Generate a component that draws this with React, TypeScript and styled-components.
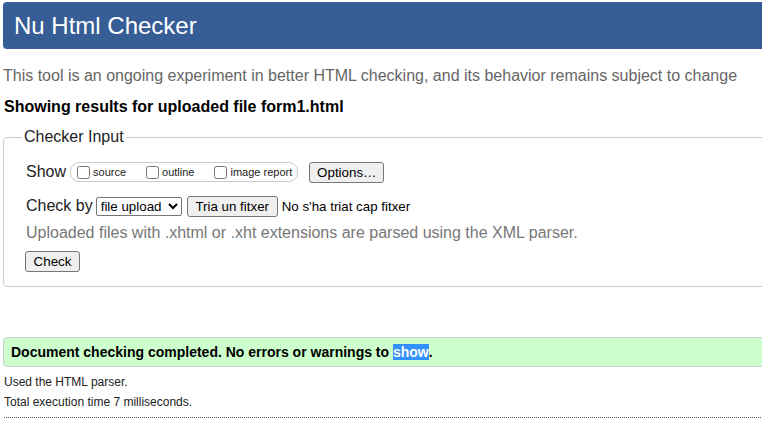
import styled, { createGlobalStyle } from "styled-components";

const GlobalStyle = createGlobalStyle`
    html, body {
        margin: 0;
        padding: 0;
        background: #fff;
        overflow: hidden;
    }
    body {
        font-family: "Liberation Sans", Arial, sans-serif;
        color: #000;
    }
`

const Page = styled.div`
    width: 800px;
    padding: 2px 0 0 3px;
`

const Header = styled.h1`
    margin: 0;
    height: 47px;
    display: flex;
    align-items: center;
    padding-left: 11px;
    background: #365d95;
    color: #fff;
    font-size: 24px;
    font-weight: 400;
    border-radius: 4px 0 0 4px;
`

const Intro = styled.p`
    margin: 18px 0 0 0;
    font-size: 16px;
    line-height: 18px;
    color: #666;
`

const Results = styled.p`
    margin: 13px 0 0 1px;
    font-size: 16px;
    line-height: 18px;
    font-weight: 700;
`

const Fieldset = styled.fieldset`
    margin: 12px 0 0 0;
    padding: 10px 0 6px 22px;
    border: 1px solid #ccc;
    border-radius: 4px 0 0 4px;
    min-width: 0;
`

const Legend = styled.legend`
    margin-left: -4px;
    padding: 0 2px;
    font-size: 16px;
    line-height: 18px;
    color: #222;
`

const Row = styled.div<{ $h: number }>`
    display: flex;
    align-items: center;
    height: ${p => p.$h}px;
`

const Label = styled.span`
    font-size: 16px;
    color: #222;
`

const Pill = styled.div`
    display: flex;
    align-items: center;
    height: 18px;
    margin-left: 4px;
    padding: 0 5px 0 6px;
    border: 1px solid #ccc;
    border-radius: 9px;
`

const Option = styled.label`
    display: flex;
    align-items: center;
    font-size: 11px;
    color: #222;
    margin-right: 20px;
    &:last-child { margin-right: 0; }

    input {
        width: 13px;
        height: 13px;
        margin: 0 3px 0 0;
    }
`

const Button = styled.button<{ $w: number; $ml?: number }>`
    width: ${p => p.$w}px;
    height: 21px;
    margin-left: ${p => p.$ml ?? 0}px;
    padding: 0;
    font-family: "Liberation Sans", Arial, sans-serif;
    font-size: 13.33px;
    color: #000;
    background: #efefef;
    border: 1px solid #767676;
    border-radius: 3px;
`

const Select = styled.select`
    width: 86px;
    height: 19px;
    margin-left: 3px;
    padding: 0;
    font-family: "Liberation Sans", Arial, sans-serif;
    font-size: 13.33px;
    color: #000;
    background: #fff;
    border: 1px solid #767676;
    border-radius: 2px;
`

const FileName = styled.span`
    margin-left: 4px;
    font-size: 13.33px;
    color: #000;
`

const Hint = styled.p`
    margin: 0;
    height: 18px;
    font-size: 16px;
    line-height: 18px;
    color: #777;
`

const Success = styled.div`
    margin-top: 50px;
    height: 28px;
    display: flex;
    align-items: center;
    padding-left: 7px;
    background: #ccffcc;
    border: 1px solid #ccc;
    border-radius: 4px 0 0 4px;
    font-size: 14px;
    font-weight: 700;
`

const Selected = styled.span`
    background: #3390ff;
    color: #fff;
`

const Notes = styled.div`
    margin-top: 5px;
`

const Note = styled.p`
    margin: 0 0 0 1px;
    font-size: 12px;
    line-height: 20px;
    color: #222;
`

const Dotted = styled.hr`
    margin: 5px 0 0 1px;
    border: 0;
    border-top: 1px dotted #555;
`

export default function App() {
    return (
        <Page>
            <GlobalStyle />
            <Header>Nu Html Checker</Header>
            <Intro>This tool is an ongoing experiment in better HTML checking, and its behavior remains subject to change</Intro>
            <Results>Showing results for uploaded file form1.html</Results>

            <Fieldset>
                <Legend>Checker Input</Legend>
                <Row $h={32}>
                    <Label>Show</Label>
                    <Pill>
                        <Option><input type="checkbox" />source</Option>
                        <Option><input type="checkbox" />outline</Option>
                        <Option><input type="checkbox" />image report</Option>
                    </Pill>
                    <Button $w={75} $ml={11}>Options…</Button>
                </Row>
                <Row $h={36}>
                    <Label>Check by</Label>
                    <Select defaultValue="file">
                        <option value="file">file upload</option>
                        <option value="address">address</option>
                        <option value="text">text input</option>
                    </Select>
                    <Button $w={91} $ml={5}>Tria un fitxer</Button>
                    <FileName>No s'ha triat cap fitxer</FileName>
                </Row>
                <Hint>Uploaded files with .xhtml or .xht extensions are parsed using the XML parser.</Hint>
                <Row $h={38}>
                    <Button $w={55} $ml={-1}>Check</Button>
                </Row>
            </Fieldset>

            <Success>Document checking completed. No errors or warnings to&nbsp;<Selected>show</Selected>.</Success>
            <Notes>
                <Note>Used the HTML parser.</Note>
                <Note>Total execution time 7 milliseconds.</Note>
            </Notes>
            <Dotted />
        </Page>
    )
}
